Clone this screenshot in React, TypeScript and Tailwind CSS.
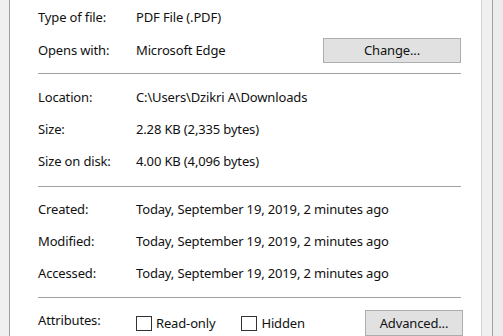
import React from 'react';

const font = { fontFamily: '"Noto Sans", "Open Sans", sans-serif' };

interface RowProps {
  label: string;
  value: string;
}

const InfoRow: React.FC<RowProps> = ({ label, value }) => (
  <div className="flex items-center h-[32px] pt-[2px] whitespace-nowrap">
    <div className="w-[98px] shrink-0">{label}</div>
    <div>{value}</div>
  </div>
);

const Separator: React.FC<{ className: string }> = ({ className }) => (
  <div className={`h-px bg-[#a0a0a0] ${className}`} />
);

const CheckBox: React.FC<{ label: string }> = ({ label }) => (
  <label className="flex items-center gap-[4px] whitespace-nowrap">
    <span className="w-[16px] h-[15px] shrink-0 border border-[#333] bg-white" />
    <span>{label}</span>
  </label>
);

const App: React.FC = () => {
  return (
    <div
      className="w-[503px] h-[336px] overflow-hidden flex bg-[#f0f0f0] text-[13px] tracking-[-0.15px] text-[#111] antialiased"
      style={font}
    >
      <div className="w-[9px] shrink-0 bg-[#f0f0f0]" />
      <div className="w-px shrink-0 bg-[#a0a0a0]" />

      {/* General tab content */}
      <div className="w-[471px] shrink-0 bg-white pl-[28px] pr-[20px] pt-[1px]">
        <InfoRow label="Type of file:" value="PDF File (.PDF)" />
        <div className="flex items-center h-[34px] pt-[1px] whitespace-nowrap">
          <div className="w-[98px] shrink-0 pt-[1px]">Opens with:</div>
          <div className="flex-1 pt-[1px]">Microsoft Edge</div>
          <button className="w-[138px] h-[25px] bg-[#e1e1e1] border border-[#adadad] leading-none">
            Change...
          </button>
        </div>
        <Separator className="mt-[6px]" />

        <div className="mt-[7px]">
          <InfoRow label="Location:" value="C:\Users\Dzikri A\Downloads" />
          <InfoRow label="Size:" value="2.28 KB (2,335 bytes)" />
          <InfoRow label="Size on disk:" value="4.00 KB (4,096 bytes)" />
        </div>
        <Separator className="mt-[9px]" />

        <div className="mt-[6px]">
          <InfoRow label="Created:" value="Today, September 19, 2019, 2 minutes ago" />
          <InfoRow label="Modified:" value="Today, September 19, 2019, 2 minutes ago" />
          <InfoRow label="Accessed:" value="Today, September 19, 2019, 2 minutes ago" />
        </div>
        <Separator className="mt-[8px]" />

        <div className="mt-[7px] flex items-start h-[32px] whitespace-nowrap">
          <div className="w-[98px] shrink-0 pt-[6px]">Attributes:</div>
          <div className="flex-1 flex items-center pt-[9px] gap-[26px]">
            <CheckBox label="Read-only" />
            <CheckBox label="Hidden" />
          </div>
          <button className="w-[98px] h-[26px] mt-[5px] mr-[-2px] bg-[#e1e1e1] border border-[#adadad] leading-none">
            Advanced...
          </button>
        </div>
      </div>

      <div className="w-px shrink-0 bg-[#d4d4d4]" />
      <div className="w-[10px] shrink-0 bg-[#f0f0f0]" />
      <div className="w-px shrink-0 bg-[#a0a0a0]" />
      <div className="flex-1 bg-[#ececec]" />
    </div>
  );
};

export default App;
